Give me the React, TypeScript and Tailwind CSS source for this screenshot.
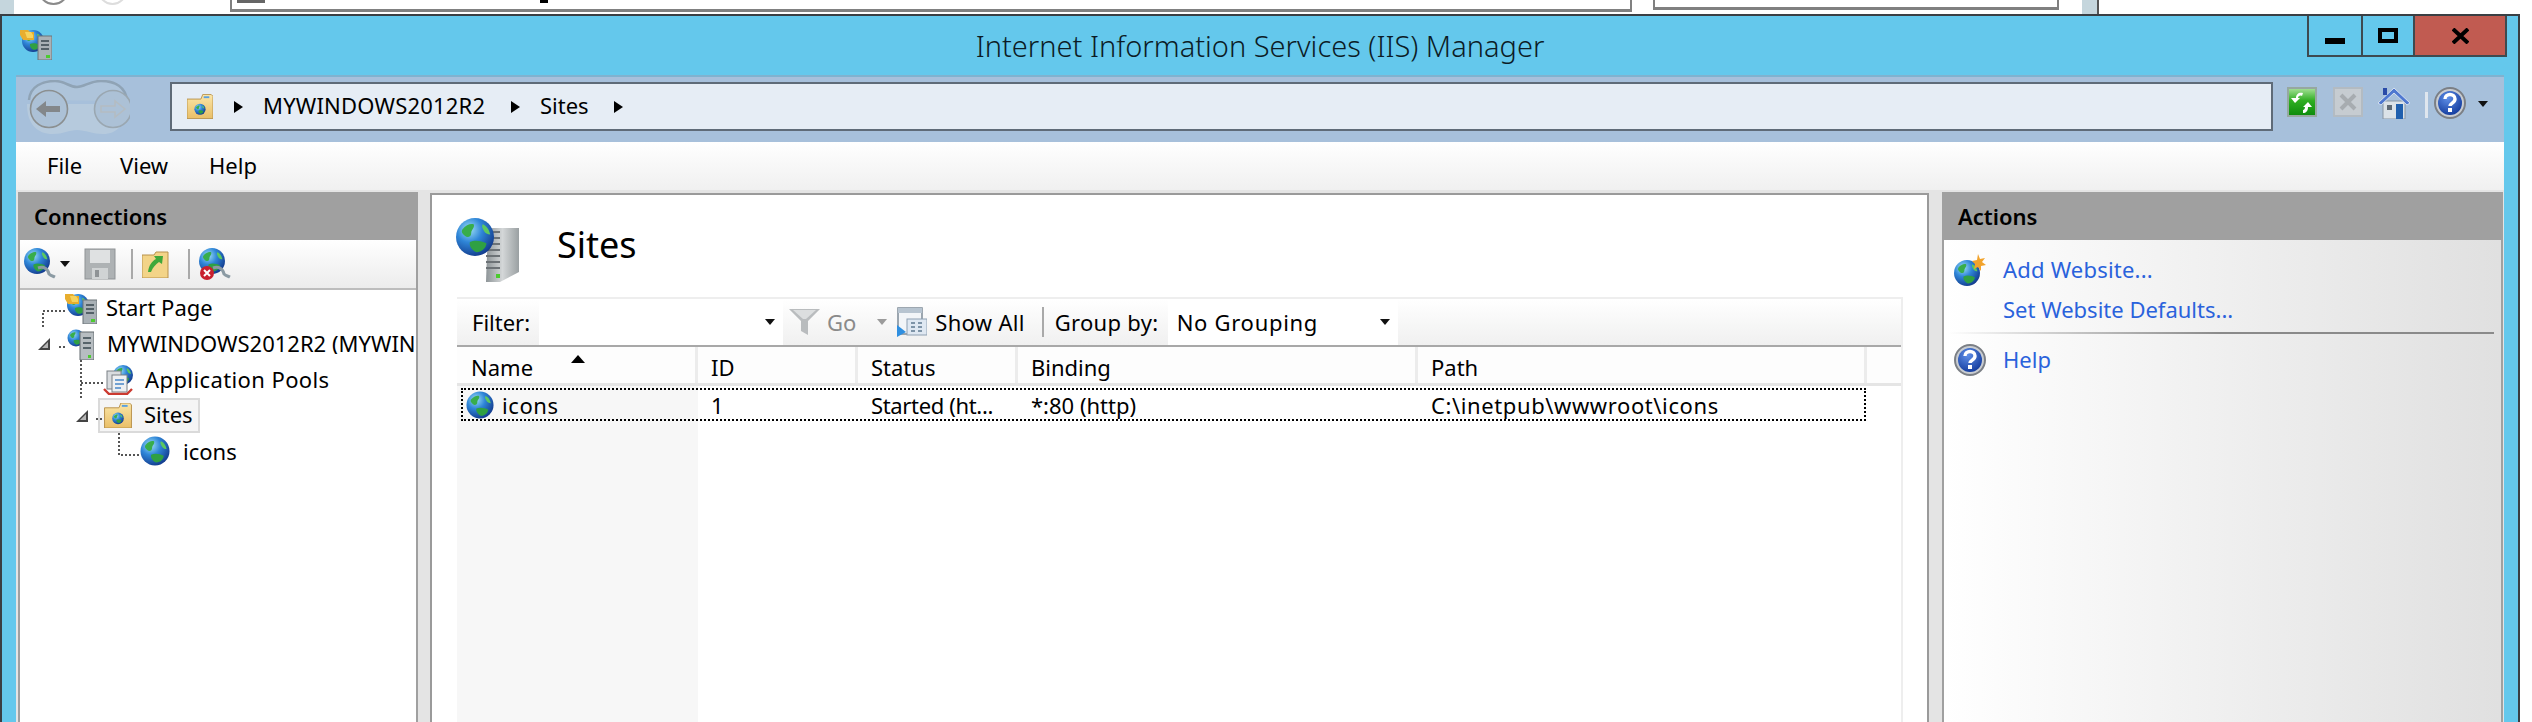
import React from "react";

const Caret = ({ className = "" }: { className?: string }) => (
  <svg viewBox="0 0 10 6" className={`w-[10px] h-[6px] shrink-0 ${className}`}>
    <path d="M0 0h10L5 6z" fill="#111" />
  </svg>
);

const Chevron = ({ className = "" }: { className?: string }) => (
  <svg viewBox="0 0 9 12" className={`w-[9px] h-[12px] shrink-0 ${className}`}>
    <path d="M0 0l9 6-9 6z" fill="#000" />
  </svg>
);

const Expander = ({ className = "" }: { className?: string }) => (
  <svg viewBox="0 0 12 12" className={`w-[12px] h-[12px] shrink-0 ${className}`}>
    <path d="M12 0v12H0z" fill="#444" />
    <path d="M10 4v6H4z" fill="#b5b5b5" />
  </svg>
);

const GlobeShape = ({ cx = 16, cy = 16, r = 15 }: { cx?: number; cy?: number; r?: number }) => {
  const k = r / 15;
  return (
    <g transform={`translate(${cx - 15 * k} ${cy - 15 * k}) scale(${k})`}>
      <defs>
        <radialGradient id="globeFill" cx="35%" cy="30%" r="75%">
          <stop offset="0%" stopColor="#9fe0f5" />
          <stop offset="45%" stopColor="#2f86d8" />
          <stop offset="100%" stopColor="#123a8c" />
        </radialGradient>
      </defs>
      <circle cx="15" cy="15" r="15" fill="url(#globeFill)" />
      <path d="M5 9c3-4 7-5 9-4 1 3-2 4-2 7s-3 4-5 2-3-3-2-5z" fill="#38ad4b" />
      <path d="M11 19c4-2 9-1 13 1 0 3-3 7-8 7-3-1-6-5-5-8z" fill="#2fa043" />
      <path d="M21 5c3 1 5 4 6 8-2 0-4-1-5-3s-2-3-1-5z" fill="#5cc860" />
    </g>
  );
};

const Globe = ({ className = "" }: { className?: string }) => (
  <svg viewBox="0 0 30 30" className={`shrink-0 ${className}`}>
    <GlobeShape cx={15} cy={15} r={14.5} />
  </svg>
);

const StartPageIcon = ({ className = "" }: { className?: string }) => (
  <svg viewBox="0 0 32 32" className={`shrink-0 ${className}`}>
    <GlobeShape cx={13} cy={13} r={11} />
    <path d="M0 2h8l2 2h4v8H3L0 7z" fill="#e8ae2e" />
    <path d="M5 4h6l2 3v3H7z" fill="#f6d35c" />
    <rect x="18" y="8" width="14" height="24" fill="#a9b1b6" />
    <rect x="18" y="8" width="14" height="24" fill="none" stroke="#6d7478" />
    <path d="M21 13h8M21 17h8M21 21h8" stroke="#39474f" strokeWidth="1.6" />
    <rect x="26" y="27" width="4" height="3" fill="#4ccb30" />
  </svg>
);

const ServerIcon = ({ className = "" }: { className?: string }) => (
  <svg viewBox="0 0 27 31" className={`shrink-0 ${className}`}>
    <GlobeShape cx={9} cy={9} r={8.5} />
    <rect x="13" y="3" width="14" height="28" fill="#b7bdc1" stroke="#636a6e" />
    <path d="M16 9h8M16 14h8M16 19h8" stroke="#39474f" strokeWidth="1.6" />
    <rect x="21" y="26" width="3" height="3" fill="#4ccb30" />
  </svg>
);

const LargeSitesIcon = ({ className = "" }: { className?: string }) => (
  <svg viewBox="0 0 63 64" className={`shrink-0 ${className}`}>
    <defs>
      <linearGradient id="towerFill" x1="0" x2="1" y1="0" y2="0">
        <stop offset="0%" stopColor="#8e9598" />
        <stop offset="50%" stopColor="#d4d7d8" />
        <stop offset="100%" stopColor="#9aa0a2" />
      </linearGradient>
    </defs>
    <path d="M32 10l31 0v44L44 64H30z" fill="url(#towerFill)" />
    <path d="M30 14h14M30 20h14M30 26h14M30 32h14M30 38h14M30 44h14M30 50h14" stroke="#6c7276" strokeWidth="2" />
    <rect x="40" y="56" width="4" height="4" fill="#4ccb30" />
    <GlobeShape cx={19} cy={19} r={19} />
  </svg>
);

const FolderGlobe = ({ className = "" }: { className?: string }) => (
  <svg viewBox="0 0 28 26" className={`shrink-0 ${className}`}>
    <defs>
      <linearGradient id="folderFill" x1="0" x2="0" y1="0" y2="1">
        <stop offset="0%" stopColor="#fbe6a8" />
        <stop offset="100%" stopColor="#e9bf68" />
      </linearGradient>
    </defs>
    <path d="M0 5h15l2-5h9l2 2v24H0z" fill="url(#folderFill)" stroke="#b8924c" />
    <rect x="18" y="2" width="6" height="2" fill="#5aa0e0" />
    <GlobeShape cx={14} cy={16} r={6} />
  </svg>
);

const NavButtons = () => (
  <svg viewBox="0 0 105 56" className="w-[105px] h-[56px] shrink-0 -mt-[2px]">
    <path
      d="M4 20C5 6 18 1 30 1c10 0 14 6 22 6s12-6 24-6c14 0 25 6 26 20"
      fill="#aec4da"
      stroke="#8fa3b5"
      strokeWidth="2.5"
    />
    <path
      d="M2 24C2 44 12 54 28 54c10 0 16-4 24-4s16 4 26 4c14 0 24-10 25-30z"
      fill="#b6cadd"
    />
    <circle cx="24" cy="29" r="18.5" fill="#acc1d6" stroke="#8b8f90" strokeWidth="1.6" />
    <path d="M11 29l10-8v5h14v6H21v5z" fill="#83878a" />
    <circle cx="88" cy="29" r="18.5" fill="#acc1d6" stroke="#9aa7b1" strokeWidth="1.6" />
    <path d="M100 29l-10-8v5H76v6h14v5z" fill="none" stroke="#b4bcc2" strokeWidth="1.6" />
  </svg>
);

const RefreshIcon = () => (
  <svg viewBox="0 0 30 30" className="w-[30px] h-[30px] shrink-0">
    <defs>
      <linearGradient id="greenFill" x1="0" x2="0" y1="0" y2="1">
        <stop offset="0%" stopColor="#a8e29a" />
        <stop offset="45%" stopColor="#2fae22" />
        <stop offset="100%" stopColor="#0b8a0b" />
      </linearGradient>
    </defs>
    <rect x="1" y="1" width="28" height="28" fill="url(#greenFill)" stroke="#96a8a0" strokeWidth="2" />
    <path d="M16 6c-4-1-7 1-7 5H4l4 5 5-5h-2c0-2 2-3 4-2z" fill="#fff" />
    <path d="M16 26c3 0 5-2 5-6h4l-4-5-5 5h2c0 2-1 3-2 3z" fill="#fff" />
  </svg>
);

const StopIcon = () => (
  <svg viewBox="0 0 30 30" className="w-[30px] h-[30px] shrink-0">
    <rect x="1" y="1" width="28" height="28" fill="#c6ccd1" stroke="#b3bbc2" strokeWidth="2" />
    <path d="M8 8l14 14M22 8L8 22" stroke="#a7acb0" strokeWidth="4" />
  </svg>
);

const HomeIcon = () => (
  <svg viewBox="0 0 32 32" className="w-[32px] h-[32px] shrink-0">
    <path d="M5 14h22v18H5z" fill="#dbe2e8" stroke="#8795a3" />
    <path d="M0 16L16 1l16 15-3 2L16 6 3 18z" fill="#4f78d0" stroke="#d4e0f0" />
    <rect x="5" y="1" width="4" height="7" fill="#2a4ba8" />
    <rect x="18" y="17" width="7" height="15" fill="#1f5fae" />
    <rect x="9" y="18" width="5" height="5" fill="#5e6a75" />
  </svg>
);

const HelpIcon = ({ className = "" }: { className?: string }) => (
  <svg viewBox="0 0 32 32" className={`shrink-0 ${className}`}>
    <defs>
      <radialGradient id="helpFill" cx="40%" cy="30%" r="75%">
        <stop offset="0%" stopColor="#5f8fe8" />
        <stop offset="100%" stopColor="#123a9c" />
      </radialGradient>
    </defs>
    <circle cx="16" cy="16" r="15" fill="#c9cdd2" stroke="#7b7f85" strokeWidth="2" />
    <circle cx="16" cy="16" r="12" fill="url(#helpFill)" />
    <path d="M11 12c0-6 10-6 10 0 0 4-5 4-5 7" fill="none" stroke="#fff" strokeWidth="3.4" />
    <rect x="14" y="21" width="4" height="4" fill="#fff" />
  </svg>
);

const ConnectIcon = ({ stop }: { stop?: boolean }) => (
  <svg viewBox="0 0 32 32" className="w-[32px] h-[32px] shrink-0">
    <GlobeShape cx={13} cy={13} r={13} />
    <path d="M14 20c6-2 10 1 11 6 2 2 4 2 6 3" fill="none" stroke="#8b9aa3" strokeWidth="3" />
    {stop && (
      <>
        <circle cx="8" cy="25" r="7" fill="#c8202e" />
        <path d="M5 22l6 6M11 22l-6 6" stroke="#fff" strokeWidth="2" />
      </>
    )}
  </svg>
);

const SaveIcon = () => (
  <svg viewBox="0 0 32 32" className="w-[32px] h-[32px] shrink-0">
    <rect x="1" y="1" width="30" height="30" fill="#aeb2b4" stroke="#8f9396" />
    <rect x="6" y="2" width="20" height="13" fill="#dfe1e2" />
    <rect x="8" y="20" width="16" height="11" fill="#d0d3d4" />
    <rect x="11" y="22" width="4" height="7" fill="#8f9396" />
  </svg>
);

const OpenFolderIcon = () => (
  <svg viewBox="0 0 28 28" className="w-[28px] h-[28px] shrink-0">
    <path d="M0 5h12l2-3h12v26H0z" fill="#f3d488" stroke="#b8924c" />
    <path d="M6 22c1-7 4-11 8-13l-2-3 9 0-1 8-3-2c-3 2-6 5-8 10z" fill="#3fa83a" />
  </svg>
);

const FunnelIcon = () => (
  <svg viewBox="0 0 31 26" className="w-[31px] h-[26px] shrink-0">
    <path d="M0 0h31L19 12v14l-7-4V12z" fill="#b9bcbe" />
    <path d="M4 1h23L17 10h-3z" fill="#dcdedf" />
  </svg>
);

const ShowAllIcon = () => (
  <svg viewBox="0 0 30 30" className="w-[30px] h-[30px] shrink-0">
    <rect x="1" y="1" width="24" height="26" fill="#f2f5f8" stroke="#7d8a96" strokeWidth="1.5" />
    <rect x="1" y="1" width="24" height="5" fill="#b7c4d0" />
    <rect x="10" y="12" width="20" height="16" fill="#dfe8f2" stroke="#8ea0b2" />
    <path d="M14 16h4M21 16h4M14 20h4M21 20h4M14 24h4M21 24h4" stroke="#5f7890" strokeWidth="1.6" />
    <path d="M0 18l9 7-9 5z" fill="#2f8fe0" />
  </svg>
);

const AddSiteIcon = () => (
  <svg viewBox="0 0 32 32" className="w-[32px] h-[32px] shrink-0">
    <GlobeShape cx={13} cy={19} r={13} />
    <path d="M24 0l2 5 5-1-3 4 4 3-5 1v5l-3-4-4 2 1-5-3-3 5-1z" fill="#f2a32c" />
  </svg>
);

const AppPoolsIcon = ({ className = "" }: { className?: string }) => (
  <svg viewBox="0 0 30 30" className={`shrink-0 ${className}`}>
    <GlobeShape cx={20} cy={10} r={10} />
    <rect x="4" y="6" width="14" height="18" fill="#d9dcdf" stroke="#7a8085" />
    <rect x="9" y="10" width="15" height="17" fill="#eef0f2" stroke="#7a8085" />
    <path d="M12 15h9M12 19h9M12 23h6" stroke="#4a86c8" strokeWidth="1.6" />
    <path d="M1 24l5 5h18l5-5" fill="none" stroke="#cc3a30" strokeWidth="2.4" />
  </svg>
);

const TreeLines = () => (
  <svg className="absolute left-0 top-0 w-[200px] h-[180px]" viewBox="0 0 200 180">
    <path
      d="M45 21H23V37M45 57H38M61 70V110M83 93H61M82 129H76M99 143V165H120"
      fill="none"
      stroke="#555"
      strokeWidth="2"
      strokeDasharray="2 2"
    />
  </svg>
);

const ToolbarSep = ({ className = "" }: { className?: string }) => (
  <div className={`w-[2px] h-[30px] bg-[#a9a9a9] shrink-0 ${className}`} />
);

const columns = [
  { label: "Name", width: "w-[241px]", pad: "pl-[14px]" },
  { label: "ID", width: "w-[160px]", pad: "pl-[13px]" },
  { label: "Status", width: "w-[160px]", pad: "pl-[13px]" },
  { label: "Binding", width: "w-[400px]", pad: "pl-[13px]" },
  { label: "Path", width: "w-[449px]", pad: "pl-[13px]" },
];

export default function App() {
  return (
    <div className="w-[2532px] h-[722px] overflow-hidden bg-white text-[22px] leading-none text-black font-['Noto_Sans','Open_Sans',sans-serif]">
      {/* browser behind the window */}
      <div className="flex items-start h-[14px] overflow-hidden">
        <div className="w-[14px] h-[14px] bg-[#c5d6dd] shrink-0" />
        <div className="w-[31px] h-[31px] rounded-full border-2 border-[#8a8a8a] -mt-[26px] ml-[24px] shrink-0" />
        <div className="w-[29px] h-[29px] rounded-full border-2 border-[#dddddd] -mt-[24px] ml-[29px] shrink-0" />
        <div className="w-[1402px] h-[12px] border-x-2 border-b-[3px] border-[#808080] ml-[103px] shrink-0 flex items-start">
          <div className="w-[28px] h-[3px] bg-[#666] ml-[5px]" />
          <div className="w-[8px] h-[3px] bg-black ml-[275px]" />
        </div>
        <div className="w-[406px] h-[10px] border-x-2 border-b-[3px] border-[#808080] ml-[21px] shrink-0" />
        <div className="w-[15px] h-[14px] bg-[#c5d6dd] ml-[23px] shrink-0" />
        <div className="w-[2px] h-[14px] bg-[#555] shrink-0" />
      </div>

      {/* window */}
      <div className="w-[2520px] h-[708px] flex flex-col border-x-2 border-t-2 border-[#3a3f44] bg-[#64c8ec]">
        <div className="h-[59px] shrink-0 grid grid-cols-[1fr_auto_1fr]">
          <div className="pl-[18px] pt-[12px]">
            <StartPageIcon className="w-[32px] h-[32px]" />
          </div>
          <div className="pt-[15px] text-[29px] text-[#0c1c26] font-light">
            Internet Information Services (IIS) Manager
          </div>
          <div className="flex justify-end pr-[11px]">
            <div className="flex h-[41px]">
              <div className="w-[56px] border-x-2 border-b-2 border-[#3d4a50] flex items-end justify-center pb-[11px]">
                <div className="w-[20px] h-[6px] bg-black" />
              </div>
              <div className="w-[52px] border-r-2 border-b-2 border-[#3d4a50] flex items-start justify-center pt-[12px]">
                <div className="w-[20px] h-[15px] border-[4px] border-black" />
              </div>
              <div className="w-[92px] bg-[#c15b51] border-b-2 border-r-2 border-[#3d4a50] flex items-start justify-center pt-[12px]">
                <svg viewBox="0 0 17 16" className="w-[17px] h-[16px]">
                  <path d="M1 1l15 14M16 1L1 15" stroke="#000" strokeWidth="4" />
                </svg>
              </div>
            </div>
          </div>
        </div>

        {/* inner frame */}
        <div className="ml-[14px] w-[2488px] flex-1 flex flex-col min-h-0">
          <div className="h-[67px] shrink-0 flex items-start border-t-2 border-[#80b2cf] bg-[#a7c0db] pt-[5px] pl-[9px]">
            <NavButtons />
            <div className="ml-[40px] w-[2103px] h-[49px] shrink-0 flex items-center border-2 border-[#5f6b78] bg-[#e6edf5] pl-[15px] text-[22px]">
              <FolderGlobe className="w-[26px] h-[25px]" />
              <Chevron className="ml-[21px]" />
              <span className="ml-[20px] w-[248px] mb-[3px] tracking-[0.2px]">MYWINDOWS2012R2</span>
              <Chevron />
              <span className="ml-[20px] w-[74px] mb-[3px]">Sites</span>
              <Chevron />
            </div>
            <div className="ml-[14px] mt-[5px] flex items-start">
              <RefreshIcon />
              <div className="ml-[16px]"><StopIcon /></div>
              <div className="ml-[15px]"><HomeIcon /></div>
              <div className="ml-[15px] mt-[5px] w-[3px] h-[26px] bg-[#dfe6ee]" />
              <HelpIcon className="ml-[6px] w-[32px] h-[32px]" />
              <Caret className="ml-[12px] mt-[14px]" />
            </div>
          </div>

          <div className="h-[48px] shrink-0 flex items-center bg-gradient-to-b from-white to-[#f0f0f0] pl-[31px] pb-[2px]">
            <span className="w-[73px]">File</span>
            <span className="w-[89px]">View</span>
            <span>Help</span>
          </div>

          <div className="flex-1 min-h-0 flex bg-[#e4e4e4] pt-[2px] pl-[2px]">
            {/* connections */}
            <div className="w-[400px] shrink-0 flex flex-col border-x-2 border-[#a0a0a0] bg-white">
              <div className="h-[48px] shrink-0 bg-[#a0a0a0] flex items-center pl-[14px] font-semibold">
                Connections
              </div>
              <div className="h-[50px] shrink-0 flex items-center border-b-2 border-[#bdbdbd] bg-gradient-to-b from-white to-[#ececec] pl-[4px]">
                <ConnectIcon />
                <Caret className="ml-[4px]" />
                <div className="ml-[14px]"><SaveIcon /></div>
                <ToolbarSep className="ml-[15px]" />
                <div className="ml-[9px]"><OpenFolderIcon /></div>
                <ToolbarSep className="ml-[18px]" />
                <div className="ml-[9px]"><ConnectIcon stop /></div>
              </div>
              <div className="relative flex-1 overflow-hidden">
                <TreeLines />
                <div className="h-[36px] flex items-center pl-[45px]">
                  <StartPageIcon className="w-[32px] h-[32px]" />
                  <span className="ml-[9px] mb-[3px]">Start Page</span>
                </div>
                <div className="h-[36px] flex items-center pl-[18px]">
                  <Expander />
                  <ServerIcon className="ml-[17px] w-[27px] h-[31px]" />
                  <span className="ml-[13px] mb-[3px] flex-1 min-w-0 overflow-hidden whitespace-nowrap">
                    MYWINDOWS2012R2 (MYWIN
                  </span>
                </div>
                <div className="h-[36px] flex items-center pl-[83px]">
                  <AppPoolsIcon className="w-[30px] h-[30px]" />
                  <span className="ml-[12px] mb-[3px] tracking-[0.4px]">Application Pools</span>
                </div>
                <div className="h-[35px] flex items-center pl-[56px]">
                  <Expander />
                  <div className="ml-[10px] w-[102px] h-[35px] flex items-center border-2 border-[#dadada] bg-[#f5f5f5] pl-[4px]">
                    <FolderGlobe className="w-[28px] h-[25px]" />
                    <span className="ml-[12px] mb-[3px]">Sites</span>
                  </div>
                </div>
                <div className="h-[36px] flex items-center pl-[120px]">
                  <Globe className="w-[30px] h-[30px]" />
                  <span className="ml-[13px]">icons</span>
                </div>
              </div>
            </div>

            {/* center */}
            <div className="ml-[12px] mt-px w-[1499px] shrink-0 flex flex-col border-x-2 border-t-2 border-[#9a9a9a] bg-white">
              <div className="h-[102px] shrink-0 flex items-start pl-[24px] pt-[23px]">
                <LargeSitesIcon className="w-[63px] h-[64px]" />
                <span className="ml-[38px] mt-[4px] text-[36px] leading-[46px]">Sites</span>
              </div>
              <div className="ml-[25px] w-[1446px] flex-1 min-h-0 flex flex-col border-t-2 border-r-2 border-[#eeeeee]">
                <div className="h-[48px] shrink-0 flex items-center border-b-2 border-[#a8a8a8] bg-gradient-to-b from-white to-[#f0f0f0]">
                  <span className="ml-[15px] w-[67px]">Filter:</span>
                  <div className="w-[244px] h-[46px] bg-white flex items-center justify-end pr-[8px] shrink-0">
                    <Caret />
                  </div>
                  <div className="ml-[6px]"><FunnelIcon /></div>
                  <span className="ml-[7px] text-[#8a8a8a]">Go</span>
                  <Caret className="ml-[21px] opacity-40" />
                  <div className="ml-[10px]"><ShowAllIcon /></div>
                  <span className="ml-[8px] tracking-[0.3px]">Show All</span>
                  <ToolbarSep className="ml-[17px]" />
                  <span className="ml-[11px] w-[113px] tracking-[0.3px]">Group by:</span>
                  <div className="w-[230px] h-[46px] bg-white flex items-center justify-between pl-[9px] pr-[8px] shrink-0">
                    <span className="tracking-[0.7px]">No Grouping</span>
                    <Caret />
                  </div>
                </div>
                <div className="h-[39px] shrink-0 flex border-b-[3px] border-[#e5e5e5] bg-[#fdfdfd]">
                  {columns.map((c) => (
                    <div
                      key={c.label}
                      className={`${c.width} ${c.pad} relative h-full flex items-center pt-[3px] border-r-[3px] border-[#ececec] shrink-0`}
                    >
                      {c.label}
                      {c.label === "Name" && (
                        <svg viewBox="0 0 14 8" className="absolute left-[114px] top-[8px] w-[14px] h-[8px]">
                          <path d="M7 0l7 8H0z" fill="#000" />
                        </svg>
                      )}
                    </div>
                  ))}
                </div>
                <div className="flex-1 pt-[2px] pl-[4px] bg-[linear-gradient(to_right,#f7f7f7_241px,white_241px)]">
                  <div className="w-[1405px] h-[33px] flex items-center border-2 border-dotted border-black">
                    <div className="w-[235px] pl-[3px] flex items-center shrink-0">
                      <Globe className="w-[28px] h-[28px]" />
                      <span className="ml-[8px] tracking-[0.6px]">icons</span>
                    </div>
                    <span className="w-[160px] pl-[13px] shrink-0">1</span>
                    <span className="w-[160px] pl-[13px] shrink-0 tracking-[-0.35px]">Started (ht...</span>
                    <span className="w-[400px] pl-[13px] shrink-0">*:80 (http)</span>
                    <span className="pl-[13px] tracking-[0.6px]">C:\inetpub\wwwroot\icons</span>
                  </div>
                </div>
              </div>
            </div>

            {/* actions */}
            <div className="ml-[13px] w-[561px] shrink-0 flex flex-col border-x-2 border-[#a0a0a0] bg-gradient-to-r from-white to-[#e0e0e0]">
              <div className="h-[48px] shrink-0 bg-[#a0a0a0] -mx-[2px] flex items-center pl-[16px] font-semibold">
                Actions
              </div>
              <div className="pt-[12px] pl-[10px] text-[#2a62dc]">
                <div className="h-[36px] flex items-center">
                  <AddSiteIcon />
                  <span className="ml-[17px] mb-[3px] tracking-[0.2px]">Add Website...</span>
                </div>
                <div className="h-[36px] mt-[3px] flex items-center pl-[49px]">Set Website Defaults...</div>
                <div className="mt-[5px] -ml-[6px] w-[546px] h-[2px] bg-gradient-to-r from-transparent via-[#8a8a8a] to-[#8a8a8a]" />
                <div className="h-[36px] mt-[8px] flex items-center">
                  <HelpIcon className="w-[32px] h-[32px]" />
                  <span className="ml-[17px] mb-[3px]">Help</span>
                </div>
              </div>
            </div>
          </div>
        </div>
      </div>
    </div>
  );
}
